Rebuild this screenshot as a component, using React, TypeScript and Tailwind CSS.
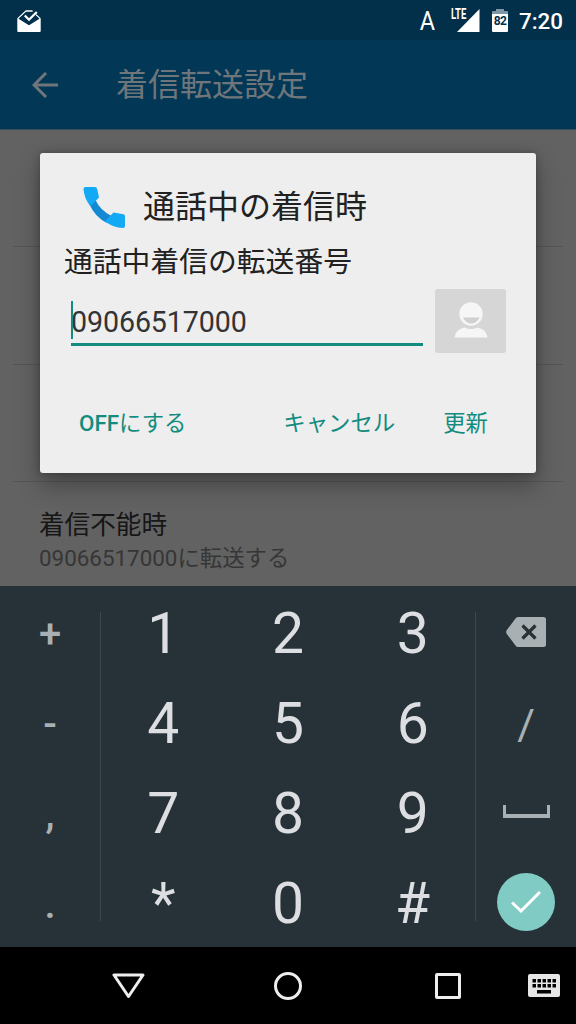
import React from "react";

const digitRows = [
  ["1", "2", "3"],
  ["4", "5", "6"],
  ["7", "8", "9"],
  ["*", "0", "#"],
];
const leftKeys = ["+", "-", ",", "."];
const dialogButton = "h-12 leading-12 whitespace-nowrap";

const StatusBar = () => (
  <div className="flex h-10 shrink-0 items-start bg-[#022f4a] text-white">
    {/* Inbox notification */}
    <svg className="mt-[9px] ml-[17px] h-6 w-6" viewBox="0 0 24 24" fill="none">
      <path d="M1 9.5 9 2H15L23 9.5" stroke="#fff" strokeWidth="1.3" strokeLinejoin="round" />
      <path d="M.3 9 12 16.3 23.7 9V22Q23.7 23 22.7 23H1.3Q.3 23 .3 22Z" fill="#fff" />
      <path d="M2 9.3 9 3.3H15L22 9.3 12 15.5Z" fill="#022f4a" />
      <path d="M12 9 21 .5" stroke="#022f4a" strokeWidth="4.5" />
      <path d="M7.8 6.5 12 10.7 19.8 3" stroke="#fff" strokeWidth="2.3" />
    </svg>
    <span className="mt-[5px] ml-auto origin-right scale-x-90 text-[26px] leading-8">A</span>
    <div className="relative mt-[9px] ml-4 h-[23px] w-[29px]">
      <svg className="h-full w-full" viewBox="0 0 29 23">
        <path d="M28.5 0V23H6Z" fill="#fff" />
      </svg>
      <span className="absolute top-0 left-0 origin-left scale-x-[0.68] bg-[#022f4a] text-[14px] leading-[11px] font-bold">
        LTE
      </span>
    </div>
    <div className="mt-[9px] ml-3 flex h-[23px] w-4 flex-col items-center">
      <div className="h-[2px] w-2 bg-[#7f98a8]" />
      <div className="h-[3px] w-full rounded-t-[1px] bg-[#7f98a8]" />
      <div className="w-full flex-1 rounded-b-[1px] bg-white text-center text-[12px] leading-[14px] font-bold tracking-[-0.7px] text-[#022f4a]">
        82
      </div>
    </div>
    <span className="mt-[5px] mr-[13px] ml-[11px] text-[22.4px] leading-8 font-medium">
      7:20
    </span>
  </div>
);

const CallDialog = () => (
  <div className="absolute top-[153px] left-10 h-[320px] w-[496px] rounded-[3px] bg-[#eee] pt-[13px] text-[#212121] shadow-[0_12px_24px_rgba(0,0,0,0.3),0_0_8px_rgba(0,0,0,0.25)]">
    <div className="flex h-20 items-center pl-[43px]">
      <svg className="mt-[2px] h-[43px] w-[43px]" viewBox="0 0 43 43">
        <path d="M6.5 18.5 12.5 14Q17 24 28.5 30L24 37Q12 31 6.5 18.5Z" fill="#1289d2" />
        <path d="M.5 3Q.5 1 2.500 1H12Q13.8 1 14.2 3L16 11.5 7.3 20.2Q1 12 .5 3Z" fill="#14a9f5" />
        <path d="M30.5 26.5 40.5 28.3Q42 28.6 42 30.3V40Q42 42 40 42 30 42 22 35.3Z" fill="#14a9f5" />
      </svg>
      <h2 className="mt-[2px] ml-[17px] text-[32px] leading-10">通話中の着信時</h2>
    </div>
    <p className="mt-px pl-6 text-[28.8px] leading-[30px]">通話中着信の転送番号</p>
    <div className="mt-3 flex h-16 pl-[31px]">
      <div className="relative h-[57px] w-[352px] border-b-[3px] border-[#128c7f] text-[28.6px] leading-[67px] tracking-[-0.1px] text-[#333]">
        <span className="absolute top-3 left-0 h-[38px] w-[2px] bg-[#128c7f]" />
        09066517000
      </div>
      <div className="ml-[12px] flex h-16 w-[71px] items-center justify-center rounded-[3px] bg-[#d6d6d6]">
        <svg className="mt-[-2px] h-9 w-[34px]" viewBox="0 0 34 36" fill="#f6f6f6">
          <circle cx="17" cy="12" r="11.7" />
          <path d="M9 15.5H25.5Q22.5 21.5 17.2 21.5 12 21.5 9 15.500Z" fill="#d0d0d0" />
          <path d="M.5 35.5Q2 27 10.5 25.5 17 28.5 23.5 25.5 32 27 33.5 35.5Z" />
        </svg>
      </div>
    </div>
    <div className="mt-[46px] flex pr-[48px] pl-[39px] text-[22.4px] text-[#128c7f]">
      <button className={dialogButton}>
        <span className="font-medium">OFF</span>にする
      </button>
      <button className={`${dialogButton} ml-auto`}>キャンセル</button>
      <button className={`${dialogButton} ml-12`}>更新</button>
    </div>
  </div>
);

const Keypad = () => (
  <div className="flex h-[361px] shrink-0 bg-[#273238] pt-px text-[#a9b0b3]">
    <div className="w-[100px] text-center text-[40px] font-medium">
      {leftKeys.map((key) => (
        <div key={key} className="h-[90px] pt-[3px] leading-[90px]">
          {key}
        </div>
      ))}
    </div>
    <div className="mt-[25px] h-[309px] w-px bg-[#3d474c]" />
    <div className="flex-1">
      {digitRows.map((row) => (
        <div key={row[0]} className="grid h-[90px] grid-cols-3 text-center text-[57px] leading-[94px] text-[#dcdee1]">
          {row.map((key) => (
            <span key={key}>{key}</span>
          ))}
        </div>
      ))}
    </div>
    <div className="mt-[25px] h-[309px] w-px bg-[#3d474c]" />
    <div className="w-[100px]">
      <div className="flex h-[90px] items-center justify-center">
        <svg className="mt-[-1px] h-[30px] w-10" viewBox="0 0 40 30">
          <path d="M12 0H37.5Q40 0 40 2.5V27.5Q40 30 37.5 30H12Q10.5 30 9.5 28.5L.8 17Q-.4 15 .8 13L9.5 1.5Q10.5 0 12 0Z" fill="#a9b0b3" />
          <path d="M16.5 8.5 29.5 21.5M29.5 8.5 16.5 21.5" stroke="#273238" strokeWidth="3.2" />
        </svg>
      </div>
      <div className="h-[90px] pt-[2px] text-center text-[43px] leading-[90px]">/</div>
      <div className="flex h-[90px] items-center justify-center">
        <div className="mt-[-1px] h-[13px] w-[47px] border-x-[3px] border-b-[4px] border-[#a9b0b3]" />
      </div>
      <div className="flex h-[90px] items-center justify-center">
        <div className="flex h-[58px] w-[58px] items-center justify-center rounded-full bg-[#80cbc4]">
          <svg className="h-[22px] w-[30px]" viewBox="0 0 30 22" fill="none" stroke="#fff" strokeWidth="3">
            <path d="M1 11.5 10 20 29 1" />
          </svg>
        </div>
      </div>
    </div>
  </div>
);

const NavBar = () => (
  <div className="flex flex-1 items-center bg-black text-[#eee]">
    <svg className="ml-28 h-[26px] w-[33px]" viewBox="0 0 33 26" fill="none" stroke="currentColor" strokeWidth="3" strokeLinejoin="round">
      <path d="M2 2H31L16.5 23.5Z" />
    </svg>
    <div className="ml-[129px] h-7 w-7 rounded-full border-[3px]" />
    <div className="ml-[133px] h-[26px] w-[26px] rounded-[2px] border-[3px]" />
    <svg className="ml-[67px] h-[23px] w-[32px]" viewBox="0 0 32 23">
      <rect width="32" height="23" rx="2" fill="#e6e6e6" />
      {[4.5, 9.5, 14.5, 19.5, 24.5].map((x) => (
        <g key={x}>
          <rect x={x} y="5" width="3.5" height="3.5" />
          <rect x={x} y="10" width="3.5" height="3.5" />
        </g>
      ))}
      <rect x="9" y="16" width="14" height="3.5" />
    </svg>
  </div>
);

const App = () => {
  return (
    <main
      lang="ja"
      className="relative flex h-[1024px] w-[576px] flex-col overflow-hidden bg-[#626262] font-[Roboto,'Noto_Sans_CJK_JP',sans-serif]"
    >
      <StatusBar />
      <header className="flex h-[90px] shrink-0 items-center border-b border-[#344d5b] bg-[#023755] text-[#6f767b]">
        <svg className="ml-8 h-[26px] w-[26px]" viewBox="0 0 26 26" fill="none" stroke="currentColor" strokeWidth="3">
          <path d="M26 13H2.5M14 1 2 13 14 25" />
        </svg>
        <h1 className="mt-px ml-[58px] text-[32px] leading-10">着信転送設定</h1>
      </header>
      <section className="flex h-[456px] shrink-0 flex-col">
        <div className="mx-[13px] h-[117px] border-b border-[#555]" />
        <div className="mx-[13px] h-[118px] border-b border-[#555]" />
        <div className="mx-[13px] h-[117px] border-b border-[#555]" />
        <div className="pt-[26px] pl-[39px]">
          <p className="text-[25.6px] leading-[34px] text-[#161616]">着信不能時</p>
          <p className="text-[22.4px] leading-8 text-[#363636]">09066517000に転送する</p>
        </div>
      </section>
      <Keypad />
      <NavBar />
      <CallDialog />
    </main>
  );
};

export default App;
